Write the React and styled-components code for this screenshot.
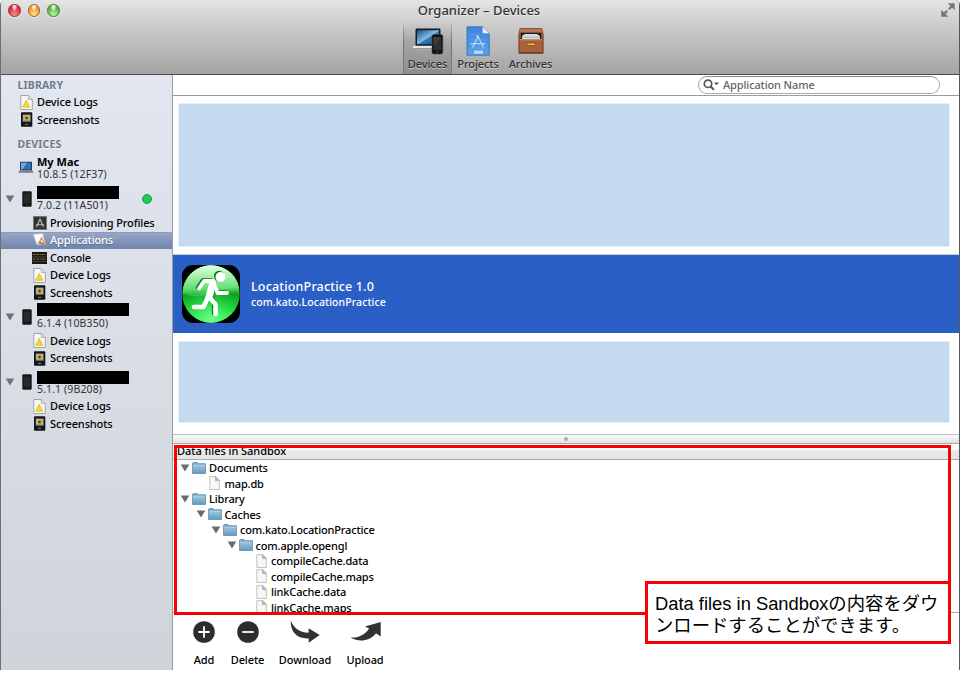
import React from "react";
import styled, { createGlobalStyle, css } from "styled-components";

const Global = createGlobalStyle`
  * { box-sizing: border-box; }
  html, body { margin: 0; padding: 0; background: #fff; }
  body { width: 960px; height: 695px; overflow: hidden; }
  svg { display: block; flex: none; }
`;

const Window = styled.div`
  position: relative;
  display: flex;
  flex-direction: column;
  width: 960px;
  height: 670px;
  border-left: 1px solid #6f6f6f;
  border-right: 1px solid #55585a;
  border-radius: 5px 5px 0 0;
  overflow: hidden;
  background: #fff;
  color: #000;
  font: 500 11px/14px "Noto Sans", "Open Sans", sans-serif;
  white-space: nowrap;
`;

const Label = styled.span`
  letter-spacing: ${(p) => p.$track || 0}px;
`;

/* ---------- title bar and toolbar ---------- */

const Titlebar = styled.header`
  display: flex;
  flex: none;
  flex-direction: column;
  height: 75px;
  background: linear-gradient(#e4e4e4, #cfcfcf 30%, #a3a3a3);
  border-bottom: 1px solid #4c4c4c;
`;

const TitleRow = styled.div`
  display: grid;
  grid-template-columns: 160px 1fr 160px;
  align-items: center;
  flex: none;
  height: 21px;
`;

const Lights = styled.div`
  display: flex;
  gap: 7px;
  padding-left: 7px;
`;

const Light = styled.i`
  width: 12.5px;
  height: 12.5px;
  border-radius: 50%;
  border: 1px solid ${(p) => p.$edge};
  background:
    radial-gradient(ellipse at 50% 12%, #fffc 0 14%, #fff0 38%),
    radial-gradient(circle at 50% 85%, ${(p) => p.$glow}, ${(p) => p.$body} 65%);
  box-shadow: 0 1px 0 #fff8;
`;

const Title = styled.h1`
  margin: 0 2px 2px 0;
  text-align: center;
  font-size: 13px;
  line-height: 18px;
  font-weight: 500;
  color: #333;
  text-shadow: 0 1px 0 #fff8;
`;

const Expand = styled.div`
  display: flex;
  justify-content: flex-end;
  padding: 0 4px 2px 0;
`;

const Tools = styled.nav`
  display: grid;
  grid-template-columns: 49px 52px 53px;
  justify-content: start;
  height: 53px;
  padding-left: 402px;
`;

const Tool = styled.div`
  display: flex;
  flex-direction: column;
  align-items: center;
  gap: 1px;
  padding-top: 5px;
  color: #2f2f2f;
  text-shadow: 0 1px 0 #fff7;
  ${(p) =>
    p.$on &&
    css`
      border: solid;
      border-width: 0 1px;
      border-image: linear-gradient(#8880, #6f6f6f 45%, #6f6f6f88) 1;
      background: linear-gradient(#0000, #0002 40%, #0002);
    `}
`;

/* ---------- sidebar ---------- */

const Body = styled.div`
  display: flex;
  flex: 1;
  min-height: 0;
`;

const Sidebar = styled.aside`
  flex: none;
  width: 172px;
  padding-top: 1px;
  background: linear-gradient(#e2e6ee, #cfd4db);
  border-right: 1px solid #9a9da2;
`;

const Heading = styled.div`
  height: 17.25px;
  margin-top: ${(p) => p.$gap || 0}px;
  padding-left: 16.5px;
  line-height: 18px;
  font-weight: 700;
  font-size: 10.5px;
  letter-spacing: 0.15px;
  color: #6d7b8c;
  text-shadow: 0 1px 0 #fff8;
`;

const Row = styled.div`
  display: flex;
  align-items: center;
  gap: 3px;
  height: 17.5px;
  padding-left: ${(p) => (p.$nested ? 31 : 18)}px;
  letter-spacing: -0.13px;
  ${(p) =>
    p.$on &&
    css`
      background: linear-gradient(#8797b8, #96a5c4 8%, #6f84ad);
      padding-bottom: 1px;
      color: #fff;
      text-shadow: 0 1px 1px #3458;
    `}
`;

const IconSlot = styled.i`
  display: flex;
  justify-content: center;
  width: 15px;
`;

const Device = styled.div`
  display: grid;
  grid-template-columns: 15.5px 20.5px 1fr 30px;
  align-items: center;
  height: ${(p) => p.$height || 30.5}px;
  margin-top: ${(p) => p.$gap || 0}px;
`;

const TwistBox = styled.i`
  display: flex;
  padding-left: 4px;
`;

const PhoneBox = styled.i`
  display: flex;
  padding-left: 5px;
`;

const Details = styled.div`
  display: flex;
  flex-direction: column;
`;

const Redacted = styled.div`
  width: ${(p) => p.$width}px;
  height: 13px;
  margin: ${(p) => p.$shift || 0}px 0 ${(p) => -(p.$shift || 0)}px;
  background: #000;
`;

const Name = styled.b`
  height: 12px;
  line-height: 11px;
  font-weight: 700;
`;

const Version = styled.span`
  height: 12px;
  line-height: 13px;
  font-weight: 400;
  font-size: 10.5px;
  letter-spacing: 0.12px;
  color: #333;
`;

const Online = styled.i`
  width: 10px;
  height: 10px;
  border-radius: 50%;
  border: 1px solid #18a046;
  background: #1ecb57;
`;

/* ---------- main column ---------- */

const Main = styled.main`
  display: flex;
  flex: 1;
  flex-direction: column;
  min-width: 0;
`;

const SearchBar = styled.div`
  display: flex;
  flex: none;
  justify-content: flex-end;
  align-items: center;
  height: 21px;
  padding-right: 19px;
  border-bottom: 1px solid #9b9b9b;
`;

const Search = styled.div`
  display: flex;
  align-items: center;
  gap: 4px;
  width: 242px;
  height: 18px;
  padding-left: 4px;
  border: 1.5px solid #aaa;
  border-top-color: #8b8b8b;
  border-radius: 9px;
  color: #666;
  line-height: 16px;
`;

const AppList = styled.section`
  display: flex;
  flex: none;
  flex-direction: column;
  height: 338px;
  padding-top: 7px;
`;

const Placeholder = styled.div`
  flex: none;
  height: ${(p) => p.$height}px;
  margin: 0 9px 0 5px;
  background: #c5daef;
  border: 1px solid #e4eef8;
`;

const Selected = styled.div`
  display: flex;
  flex: none;
  align-items: center;
  gap: 10px;
  height: 79px;
  margin: 7px 0 8px;
  padding-left: 8px;
  background: #2a60c6;
  border-top: 1px solid #c9ced6;
  color: #fff;
`;

const AppText = styled.div`
  display: flex;
  flex-direction: column;
`;

const AppName = styled.div`
  font-size: 12.5px;
  line-height: 16px;
  letter-spacing: 0.17px;
`;

const AppId = styled.div`
  font-size: 10.5px;
  line-height: 14px;
  letter-spacing: 0.1px;
`;

const Splitter = styled.div`
  display: flex;
  flex: none;
  align-items: center;
  justify-content: center;
  height: 10px;
  background: linear-gradient(#fafafa, #e2e2e2);
  border-top: 1px solid #c2c2c2;
  border-bottom: 1px solid #a9a9a9;
`;

const Dimple = styled.i`
  width: 4px;
  height: 4px;
  border-radius: 50%;
  background: #aaa;
`;

const PaneHeader = styled.div`
  flex: none;
  height: 16px;
  padding-left: 4px;
  line-height: 14px;
  background: linear-gradient(#fff 30%, #e8e8e8 50%, #e6e6e6);
  border-bottom: 1px solid #aaa;
`;

const Tree = styled.div`
  flex: none;
  height: 153px;
  overflow: hidden;
  border-bottom: 1px solid #aaa;
`;

const Node = styled.div`
  display: flex;
  align-items: center;
  height: 15.5px;
  padding-left: ${(p) => 7 + p.$depth * 15.5}px;
  line-height: 13px;
  letter-spacing: -0.16px;
`;

const Twist = styled.i`
  display: flex;
  width: 12px;
`;

const NodeIcon = styled.i`
  display: flex;
  justify-content: center;
  width: 14px;
  margin-right: 3px;
`;

const Actions = styled.footer`
  display: grid;
  grid-template-columns: 43px 44px 71px 49px;
  padding: 6px 0 0 9.5px;
`;

const Action = styled.div`
  display: grid;
  grid-template-rows: 26px 26px;
  align-items: center;
  justify-items: center;
  line-height: 14px;
  letter-spacing: -0.1px;
`;

const ActionLabel = styled.span`
  align-self: end;
  margin-bottom: 4px;
`;

/* ---------- annotations drawn over the window ---------- */

const RedFrame = styled.div`
  position: absolute;
  left: 174px;
  top: 445px;
  width: 777px;
  height: 170px;
  border: 3px solid #f80008;
`;

const Callout = styled.div`
  position: absolute;
  left: 645px;
  top: 581px;
  width: 306px;
  height: 63px;
  padding: 9px 0 0 7px;
  border: 3px solid #f80008;
  background: #fff;
  color: #000;
  font: 400 18.35px/22px "Liberation Sans", "Noto Sans CJK JP", sans-serif;
  white-space: nowrap;
`;

/* ---------- icons ---------- */

const LogIcon = () => (
  <svg width="13" height="15" viewBox="0 0 13 15">
    <path d="M.8.5h7.5l4 4v10H.8z" fill="#f8f8f8" stroke="#a2a4a8" />
    <path d="M8.3.5v4h4" fill="#ddd" stroke="#a2a4a8" strokeWidth=".8" />
    <path d="M6.2 5.2 10 12.3H2.5z" fill="#f8d33c" stroke="#e2b51f" strokeWidth=".7" strokeLinejoin="round" />
  </svg>
);

const ShotIcon = () => (
  <svg width="13" height="15" viewBox="0 0 13 15">
    <rect x="1" y=".3" width="11.3" height="14.5" rx=".8" fill="#151515" />
    <rect x="2.8" y="2.6" width="7.7" height="7.2" fill="#8fb7c8" />
    <circle cx="6.6" cy="6" r="2.8" fill="#f0a526" />
    <circle cx="6.6" cy="6" r="1.2" fill="#4b2c12" />
    <path d="M2.8 8.8h7.7v1H2.8z" fill="#3d7540" />
    <path d="M5 12.3h3.2" stroke="#888" />
  </svg>
);

const ProfileIcon = () => (
  <svg width="14" height="14" viewBox="0 0 14 14">
    <rect x=".5" y=".5" width="13" height="13" fill="#333" stroke="#777" />
    <path d="M3.6 11 7 3l3.4 8M3 8.8h8" fill="none" stroke="#bbb" strokeWidth="1.1" />
  </svg>
);

const AppsIcon = () => (
  <svg width="14" height="14" viewBox="0 0 14 14">
    <path d="m.5 1.6 9-1 2.5 10-8 1z" fill="#fff" stroke="#d5d5d5" strokeWidth=".6" />
    <path d="M5.5 11.5 8.6 5l3.6 7M5 9.6l8 1.5" fill="none" stroke="#cf9a66" strokeWidth="1.5" />
    <path d="m6.5 9 3.5 1.8" stroke="#8a5a3c" strokeWidth="1" />
  </svg>
);

const ConsoleIcon = () => (
  <svg width="15" height="12" viewBox="0 0 15 12">
    <path d="M0 0h15v12H0z" fill="#1c1813" />
    <path d="M1 2.5h13M1 7h13" stroke="#a08135" strokeWidth="1.2" strokeDasharray="2 .8 1 .6" />
    <path d="M0 4.8h15M0 9.5h15" stroke="#57534d" strokeWidth=".7" />
  </svg>
);

const MacIcon = () => (
  <svg width="17" height="13" viewBox="-1 0 17 13">
    <path d="M2 .8h12v8.6H2z" fill="#2b3947" />
    <path d="M3 1.8h10v6.6H3z" fill="#2d6fb8" />
    <path d="M3 1.8h6L4.5 8.4H3z" fill="#6ba9df" />
    <path d="M1.4 9.4h13.2l1.2 2.4H.2z" fill="#777e87" />
  </svg>
);

const PhoneIcon = () => (
  <svg width="10" height="16" viewBox="0 0 10 16">
    <rect x=".3" y=".3" width="9.4" height="15.4" rx="1.2" fill="#161616" />
    <path d="M1.7 2.6h6.6v10H1.7z" fill="#292929" />
    <circle cx="5" cy="14.1" r=".7" fill="#444" />
  </svg>
);

const Triangle = ({ fill = "#64748a" }) => (
  <svg width="10" height="8" viewBox="0 0 10 8">
    <path d="M.7.6h8.6L5 7.6z" fill={fill} />
  </svg>
);

const FolderIcon = () => (
  <svg width="14" height="12" viewBox="0 0 14 12">
    <defs>
      <linearGradient id="folder" x2="0" y2="1">
        <stop stopColor="#9fc6dd" />
        <stop offset="1" stopColor="#649abe" />
      </linearGradient>
    </defs>
    <path d="M.5 11.5V1.2L1.2.5h4l1 1.2h7.3v9.8z" fill="#79a9c7" stroke="#5d8fae" strokeWidth=".8" />
    <path d="M.9 3.3h12.2v7.9H.9z" fill="url(#folder)" />
    <path d="M1 3.2h12" stroke="#c2deed" strokeWidth=".7" />
  </svg>
);

const FileIcon = () => (
  <svg width="11" height="14" viewBox="0 0 11 14">
    <path d="M.8.6h6l3.5 3.6v9.3H.8z" fill="#f7f7f7" stroke="#bbb" strokeWidth=".9" />
    <path d="M6.4.6v4h4z" fill="#bbb" stroke="#999" strokeWidth=".5" />
  </svg>
);

const DevicesIcon = () => (
  <svg width="34" height="30" viewBox="0 0 34 30">
    <defs>
      <linearGradient id="screen" x2="1" y2="1">
        <stop stopColor="#1c4f80" />
        <stop offset=".5" stopColor="#83bde7" />
        <stop offset=".55" stopColor="#3478b1" />
        <stop offset="1" stopColor="#1a4571" />
      </linearGradient>
    </defs>
    <rect x="4.5" y="2.5" width="25" height="17.5" rx="1.2" fill="#161c22" />
    <path d="M6 4.2h22v14H6z" fill="url(#screen)" />
    <path d="M2.5 19.8h21v1.4l-.5 2H3l-1.5-1.5z" fill="#e6e6e6" />
    <path d="M2 22.6h20" stroke="#8b8b8b" />
    <rect x="21" y="8.5" width="10.8" height="19.5" rx="1.8" fill="#111" stroke="#444" strokeWidth=".6" />
    <path d="M22.5 11h7.8v13.2h-7.8z" fill="#2c2f32" />
    <path d="M22.5 11h7.8l-7.8 9z" fill="#3b3f43" />
    <circle cx="26.4" cy="26.1" r=".8" fill="#555" />
  </svg>
);

const ProjectsIcon = () => (
  <svg width="26" height="30" viewBox="0 0 26 30">
    <defs>
      <linearGradient id="blueprint" x2="0" y2="1">
        <stop stopColor="#3b84db" />
        <stop offset="1" stopColor="#5aa2ea" />
      </linearGradient>
    </defs>
    <path d="M2 .8h15.7l6.5 6.5v21.9H2z" fill="url(#blueprint)" stroke="#2e6cb6" strokeWidth=".8" />
    <path d="M17.7.8v6.5h6.5z" fill="#eef3f8" stroke="#9bb" strokeWidth=".5" />
    <path d="m7.6 21.5 5.5-11 5.4 11M5.5 17.7h15M11.3 9.5l3.5 3.8" fill="none" stroke="#b8d7f6" strokeWidth="1.3" />
    <path d="M5 8h10M5 14h16M5 22h16" stroke="#78b2ec" strokeWidth=".5" />
    <path d="M9 24.6h9v3.2H9z" fill="#b9d9f8" />
  </svg>
);

const ArchivesIcon = () => (
  <svg width="28" height="30" viewBox="0 0 28 30">
    <path d="M3 2.6h22l1.2 6v18.6H1.8V8.6z" fill="#9c5836" stroke="#6d371f" strokeWidth=".7" />
    <path d="M3.2 3h21.6l.8 3.2H2.4z" fill="#b97450" />
    <path d="M3.8 6.8h20.4v6.4H3.8z" fill="#1f1a18" />
    <path d="M5 13.2V9.8l3-1.9h12l3 2v3.3z" fill="#cfe0e8" />
    <path d="M5 11.3h18" stroke="#86a9bb" strokeWidth=".7" />
    <path d="M3 13h22v13.4H3z" fill="#a96240" />
    <path d="M3 13h22v1.4H3z" fill="#c98660" />
    <path d="M9.8 17h8.4v2.6H9.8z" fill="#edb84f" stroke="#764016" strokeWidth=".7" />
    <path d="M2 26.8h24" stroke="#60311d" />
  </svg>
);

const ExpandIcon = () => (
  <svg width="14" height="14" viewBox="0 0 14 14">
    <g fill="#777" stroke="#777" strokeWidth="2.2">
      <path d="m7.8 6.2 3-3M6.2 7.8l-3 3" />
      <path d="M6.7.3h7v7zM7.3 13.7h-7v-7z" stroke="none" />
    </g>
  </svg>
);

const SearchIcon = () => (
  <svg width="16" height="12" viewBox="0 0 16 12">
    <circle cx="5" cy="4.8" r="3.7" fill="none" stroke="#555" strokeWidth="1.7" />
    <path d="m7.7 7.5 3.2 3.4" stroke="#555" strokeWidth="2" />
    <path d="M11 3.5h5l-2.5 2.8z" fill="#555" />
  </svg>
);

const RunnerIcon = () => (
  <svg width="60" height="60" viewBox="0 0 60 60">
    <defs>
      <linearGradient id="orb" x2="0" y2="1">
        <stop stopColor="#b6f9bd" />
        <stop offset=".4" stopColor="#4fd960" />
        <stop offset=".5" stopColor="#109d28" />
        <stop offset=".75" stopColor="#19d035" />
        <stop offset="1" stopColor="#50ff72" />
      </linearGradient>
      <linearGradient id="gloss" x2="0" y2="1">
        <stop stopColor="#e1ffe4" />
        <stop offset="1" stopColor="#4fdc61" stopOpacity=".4" />
      </linearGradient>
      <radialGradient id="glow" cx=".5" cy=".95" r=".6">
        <stop stopColor="#72ff8c" />
        <stop offset="1" stopColor="#18dd36" stopOpacity="0" />
      </radialGradient>
    </defs>
    <rect x="1" y="1" width="58" height="58" rx="11" fill="#000" />
    <circle cx="30" cy="30" r="28.7" fill="url(#orb)" />
    <circle cx="30" cy="30" r="28.7" fill="url(#glow)" />
    <path d="M1.5 29C3 12 15 1.5 30 1.5S57 12 58 24C46 23 39 27 30 30S12 34 1.5 29z" fill="url(#gloss)" />
    <g fill="none" stroke="#fff" strokeLinejoin="round" strokeLinecap="round">
      <g stroke="#087d1b" transform="translate(-1.4 -1)">
        <path d="m18 24.5 5-7.5h9l4.5 12H46" strokeWidth="3.6" />
        <path d="m31 32 3.5 7.5V50" strokeWidth="4.5" />
        <circle cx="39.5" cy="13" r="3.2" strokeWidth="4" />
      </g>
      <path d="m18 24.5 5-7.5h9l4.5 12H46" strokeWidth="3.8" />
      <path d="m31.5 20-3.5 13" strokeWidth="7" />
      <path d="m27 33-4.5 10H13" strokeWidth="4.6" />
      <path d="m28.5 33 6 7.5V50" strokeWidth="4.6" />
    </g>
    <circle cx="39.5" cy="13" r="5" fill="#fff" />
  </svg>
);

const RoundIcon = ({ plus }) => (
  <svg width="22" height="22" viewBox="0 0 22 22">
    <circle cx="11" cy="11" r="10.8" fill="#2d2d2d" />
    <path d={plus ? "M5.3 11h11.4M11 5.3v11.4" : "M5.3 11h11.4"} stroke="#fff" strokeWidth="1.8" />
  </svg>
);

const DownloadIcon = () => (
  <svg width="30" height="24" viewBox="0 0 30 24">
    <path d="M.7.5C4 8 9 12.6 18.6 12.7V8.3L29.7 15l-11 7.7v-4.3C7 19 .4 12 .7.5z" fill="#333" />
  </svg>
);

const UploadIcon = () => (
  <svg width="31" height="22" viewBox="0 0 31 22">
    <path d="M.5 16.5c9 .6 14.5-3.2 18.6-9L15 5.4 30.7 1v14.5L26 12.2C20 19.8 9.5 22 .5 16.5z" fill="#333" />
  </svg>
);

/* ---------- data ---------- */

const icons = { log: LogIcon, shot: ShotIcon, profile: ProfileIcon, apps: AppsIcon, console: ConsoleIcon };

const library = [
  ["log", "Device Logs"],
  ["shot", "Screenshots"],
];

const devices = [
  {
    version: "7.0.2 (11A501)",
    width: 82,
    online: true,
    items: [
      ["profile", "Provisioning Profiles"],
      ["apps", "Applications"],
      ["console", "Console"],
      ...library,
    ],
  },
  { version: "6.1.4 (10B350)", width: 92, shift: -1.5, items: library },
  { version: "5.1.1 (9B208)", width: 92, shift: 1.5, items: library },
];

const files = [
  [0, "Documents", true],
  [1, "map.db"],
  [0, "Library", true],
  [1, "Caches", true],
  [2, "com.kato.LocationPractice", true],
  [3, "com.apple.opengl", true],
  [4, "compileCache.data"],
  [4, "compileCache.maps"],
  [4, "linkCache.data"],
  [4, "linkCache.maps"],
];

const SidebarRow = ({ icon, text, nested }) => {
  const Icon = icons[icon];
  return (
    <Row $nested={nested} $on={text === "Applications"}>
      <IconSlot><Icon /></IconSlot>
      <span>{text}</span>
    </Row>
  );
};

export default function App() {
  return (
    <>
      <Global />
      <Window>
        <Titlebar>
          <TitleRow>
            <Lights>
              <Light $edge="#94343a" $body="#dc2935" $glow="#ff8b8b" />
              <Light $edge="#9d6a2c" $body="#eb982e" $glow="#ffe382" />
              <Light $edge="#477d37" $body="#58b343" $glow="#bdf49a" />
            </Lights>
            <Title>Organizer – Devices</Title>
            <Expand><ExpandIcon /></Expand>
          </TitleRow>
          <Tools>
            <Tool $on><DevicesIcon /><Label $track={-0.1}>Devices</Label></Tool>
            <Tool><ProjectsIcon /><Label $track={-0.1}>Projects</Label></Tool>
            <Tool><ArchivesIcon /><Label $track={-0.1}>Archives</Label></Tool>
          </Tools>
        </Titlebar>
        <Body>
          <Sidebar>
            <Heading>LIBRARY</Heading>
            {library.map(([icon, text]) => <SidebarRow key={text} icon={icon} text={text} />)}
            <Heading $gap={6.5}>DEVICES</Heading>
            <Device $gap={3} $height={25}>
              <span />
              <MacIcon />
              <Details>
                <Name>My Mac</Name>
                <Version>10.8.5 (12F37)</Version>
              </Details>
            </Device>
            {devices.map((d, i) => (
              <React.Fragment key={d.version}>
                <Device $gap={i ? 0 : 3.5}>
                  <TwistBox><Triangle /></TwistBox>
                  <PhoneBox><PhoneIcon /></PhoneBox>
                  <Details>
                    <Redacted $width={d.width} $shift={d.shift} />
                    <Version>{d.version}</Version>
                  </Details>
                  {d.online && <Online />}
                </Device>
                {d.items.map(([icon, text]) => <SidebarRow key={text} nested icon={icon} text={text} />)}
              </React.Fragment>
            ))}
          </Sidebar>
          <Main>
            <SearchBar>
              <Search><SearchIcon /><Label $track={-0.13}>Application Name</Label></Search>
            </SearchBar>
            <AppList>
              <Placeholder $height={144} />
              <Selected>
                <RunnerIcon />
                <AppText>
                  <AppName>LocationPractice 1.0</AppName>
                  <AppId>com.kato.LocationPractice</AppId>
                </AppText>
              </Selected>
              <Placeholder $height={82} />
            </AppList>
            <Splitter><Dimple /></Splitter>
            <PaneHeader><Label $track={-0.05}>Data files in Sandbox</Label></PaneHeader>
            <Tree>
              {files.map(([depth, name, folder]) => (
                <Node key={name} $depth={depth}>
                  <Twist>{folder && <Triangle fill="#6b6b6b" />}</Twist>
                  <NodeIcon>{folder ? <FolderIcon /> : <FileIcon />}</NodeIcon>
                  <span>{name}</span>
                </Node>
              ))}
            </Tree>
            <Actions>
              <Action><RoundIcon plus /><ActionLabel>Add</ActionLabel></Action>
              <Action><RoundIcon /><ActionLabel>Delete</ActionLabel></Action>
              <Action><DownloadIcon /><ActionLabel>Download</ActionLabel></Action>
              <Action><UploadIcon /><ActionLabel>Upload</ActionLabel></Action>
            </Actions>
          </Main>
        </Body>
      </Window>
      <RedFrame />
      <Callout>Data files in Sandboxの内容をダウ<br />ンロードすることができます。</Callout>
    </>
  );
}
